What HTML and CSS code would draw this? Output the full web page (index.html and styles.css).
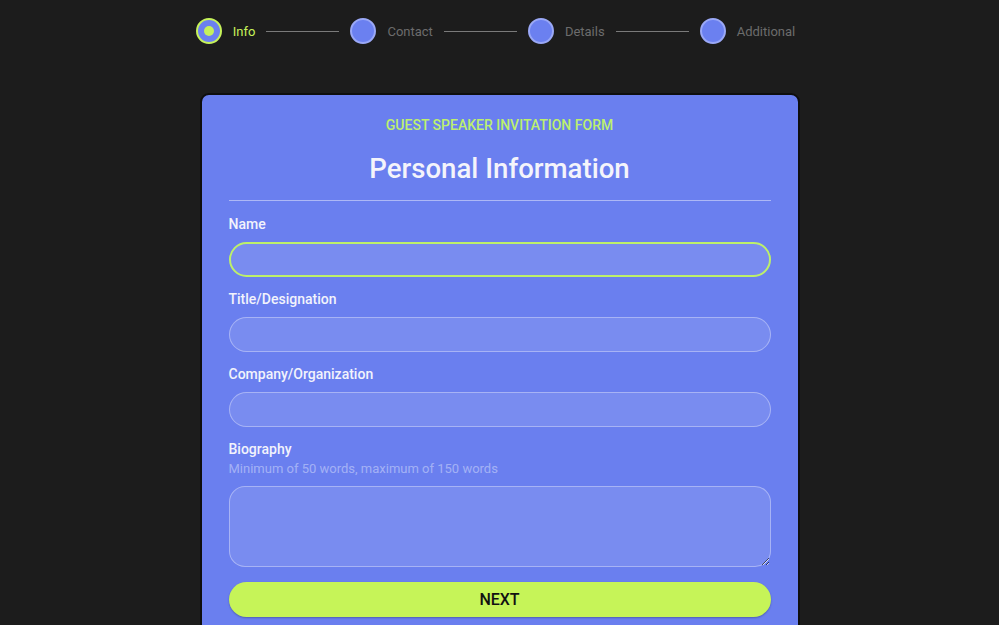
FILE: index.html
```html
<!DOCTYPE html>
<html>
<head>
<meta charset="utf-8">
<link rel="stylesheet" href="styles.css">
</head>
<body>
<div class="page">
  <nav class="stepper">
    <div class="step active"><span class="dot"><span class="inner"></span></span><span class="label">Info</span></div>
    <span class="line"></span>
    <div class="step"><span class="dot"></span><span class="label">Contact</span></div>
    <span class="line"></span>
    <div class="step"><span class="dot"></span><span class="label">Details</span></div>
    <span class="line"></span>
    <div class="step"><span class="dot"></span><span class="label">Additional</span></div>
  </nav>

  <form class="card">
    <div class="eyebrow">GUEST SPEAKER INVITATION FORM</div>
    <h1 class="title">Personal Information</h1>
    <hr class="divider">

    <div class="field">
      <label class="flabel">Name</label>
      <input class="input focused" type="text">
    </div>
    <div class="field">
      <label class="flabel">Title/Designation</label>
      <input class="input" type="text">
    </div>
    <div class="field">
      <label class="flabel">Company/Organization</label>
      <input class="input" type="text">
    </div>
    <div class="field">
      <label class="flabel">Biography</label>
      <div class="hint">Minimum of 50 words, maximum of 150 words</div>
      <textarea class="textarea"></textarea>
    </div>
    <button class="next" type="button">NEXT</button>
  </form>
</div>
</body>
</html>
```

FILE: styles.css
```css
html, body {
  margin: 0;
  padding: 0;
  background: #1c1c1c;
  font-family: Roboto, "Liberation Sans", sans-serif;
}
.page {
  display: flex;
  flex-direction: column;
  align-items: center;
}
.stepper {
  display: flex;
  align-items: center;
  gap: 11px;
  height: 26px;
  margin-top: 18px;
  margin-left: -8px;
}
.step {
  display: flex;
  align-items: center;
  gap: 11px;
}
.dot {
  width: 22px;
  height: 22px;
  border-radius: 50%;
  background: #6b80f0;
  border: 2px solid #9aa8f6;
  display: flex;
  align-items: center;
  justify-content: center;
}
.step.active .dot {
  border-color: #c6f25a;
}
.inner {
  width: 10px;
  height: 10px;
  border-radius: 50%;
  background: #c6f25a;
}
.label {
  font-size: 13px;
  color: #6c6c6c;
}
.step.active .label {
  color: #c6f25a;
}
.line {
  width: 73px;
  height: 1px;
  background: #7a7a7a;
}
.card {
  box-sizing: border-box;
  width: 600px;
  margin-top: 49px;
  background: #6a7fef;
  border: 2px solid #0e0e0e;
  border-radius: 9px;
  padding: 21px 27px 40px;
  display: flex;
  flex-direction: column;
}
.eyebrow {
  text-align: center;
  color: #bdf06e;
  font-size: 14px;
  font-weight: 500;
  line-height: 18px;
}
.title {
  margin: 17px 0 0;
  text-align: center;
  color: #f4f4fb;
  font-size: 27.6px;
  font-weight: 500;
  line-height: 36px;
}
.divider {
  margin: 13px 0 0;
  border: 0;
  height: 1px;
  background: rgba(255,255,255,0.45);
}
.field {
  display: flex;
  flex-direction: column;
  margin-top: 14px;
}
.divider + .field {
  margin-top: 15px;
}
.flabel {
  color: #f2f3fc;
  font-size: 14px;
  font-weight: 500;
  line-height: 17px;
  margin-bottom: 9px;
}
.hint {
  color: rgba(255,255,255,0.4);
  font-size: 13px;
  line-height: 17px;
  margin-top: -7px;
  margin-bottom: 9px;
}
.input {
  box-sizing: border-box;
  height: 35px;
  border-radius: 18px;
  background: rgba(255,255,255,0.1);
  border: 1px solid rgba(255,255,255,0.35);
  outline: none;
  margin: 0;
}
.input.focused {
  border: 2px solid #bdf06a;
}
.textarea {
  box-sizing: border-box;
  height: 81px;
  border-radius: 16px;
  background: rgba(255,255,255,0.1);
  border: 1px solid rgba(255,255,255,0.35);
  outline: none;
  margin: 0;
  resize: vertical;
  font-family: inherit;
}
.next {
  margin-top: 15px;
  height: 35px;
  border: 0;
  border-radius: 18px;
  background: #c6f458;
  color: #111;
  font-family: inherit;
  font-size: 16px;
  font-weight: 500;
  box-shadow: 0 1px 2px rgba(0,0,0,0.25);
}
```
